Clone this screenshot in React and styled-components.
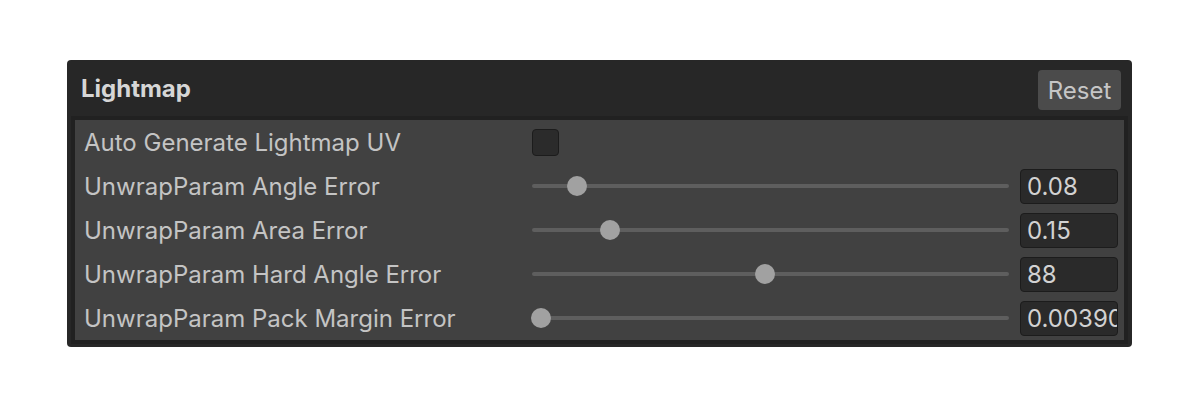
import React from "react";
import styled, { createGlobalStyle } from "styled-components";

const Global = createGlobalStyle`
  html, body { margin: 0; padding: 0; background: #ffffff; }
  body { font-family: Inter, "Noto Sans", sans-serif; }
`;

const Page = styled.div`
  width: 1200px;
  height: 400px;
  padding: 60px 0 0 67px;
  box-sizing: border-box;
`;

const Panel = styled.section`
  width: 1065px;
  background: #272727;
  border-radius: 4px;
  padding: 0 4px 3px 4px;
  box-sizing: border-box;
`;

const Header = styled.header`
  height: 56px;
  display: flex;
  align-items: center;
  justify-content: space-between;
  padding: 0 7px 0 10px;
`;

const Title = styled.h2`
  margin: 0;
  font-family: Inter, sans-serif;
  font-size: 24px;
  font-weight: 700;
  color: #d6d6d6;
`;

const ResetButton = styled.button`
  height: 40px;
  width: 83px;
  margin-top: 4px;
  border: none;
  border-radius: 4px;
  background: #4b4b4b;
  color: #c6c6c6;
  font-family: Inter, sans-serif;
  font-size: 24px;
  padding: 0;
`;

const Body = styled.div`
  border: 4px solid #212121;
  background: #414141;
  display: flex;
  flex-direction: column;
`;

const Row = styled.div`
  height: 44px;
  display: grid;
  grid-template-columns: 437px 477px 98px;
  column-gap: 11px;
  align-items: center;
  padding-left: 9px;
`;

const Label = styled.span`
  font-family: Inter, sans-serif;
  font-size: 24px;
  color: #c4c4c4;
  white-space: nowrap;
`;

const Checkbox = styled.div`
  width: 27px;
  height: 27px;
  box-sizing: border-box;
  border: 1px solid #1c1c1c;
  border-radius: 4px;
  background: #2b2b2b;
`;

const Track = styled.div`
  position: relative;
  height: 20px;
  display: flex;
  align-items: center;
  &::before {
    content: "";
    width: 100%;
    height: 4px;
    background: #5e5e5e;
    border-radius: 2px;
  }
`;

const Thumb = styled.div`
  position: absolute;
  top: 0;
  width: 20px;
  height: 20px;
  border-radius: 50%;
  background: #a1a1a1;
  margin-left: -10px;
`;

const Field = styled.div`
  height: 35px;
  box-sizing: border-box;
  border: 1px solid #1c1c1c;
  border-radius: 4px;
  background: #2a2a2a;
  color: #d2d2d2;
  font-family: Inter, sans-serif;
  font-size: 24px;
  line-height: 33px;
  padding-left: 6px;
  overflow: hidden;
  white-space: nowrap;
`;

const sliders = [
  { label: "UnwrapParam Angle Error", value: "0.08", pos: 45 },
  { label: "UnwrapParam Area Error", value: "0.15", pos: 78 },
  { label: "UnwrapParam Hard Angle Error", value: "88", pos: 233 },
  { label: "UnwrapParam Pack Margin Error", value: "0.00390625", pos: 9 },
];

export default function App() {
  return (
    <>
      <Global />
      <Page>
        <Panel>
          <Header>
            <Title>Lightmap</Title>
            <ResetButton>Reset</ResetButton>
          </Header>
          <Body>
            <Row>
              <Label>Auto Generate Lightmap UV</Label>
              <Checkbox />
            </Row>
            {sliders.map((s) => (
              <Row key={s.label}>
                <Label>{s.label}</Label>
                <Track>
                  <Thumb style={{ left: `${s.pos}px` }} />
                </Track>
                <Field>{s.value}</Field>
              </Row>
            ))}
          </Body>
        </Panel>
      </Page>
    </>
  );
}
